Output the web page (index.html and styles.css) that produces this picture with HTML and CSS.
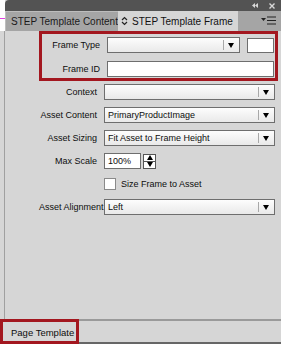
FILE: index.html
```html
<!DOCTYPE html>
<html>
<head>
<meta charset="utf-8">
<link rel="stylesheet" href="styles.css">
</head>
<body>
<div class="app">
  <div class="top">
    <div class="gutter">
      <div class="gutter-white"><div class="magenta"></div></div>
      <div class="gutter-gray"></div>
    </div>
    <div class="panel">
      <div class="titlebar">
        <svg class="ico-collapse" width="6" height="5" viewBox="0 0 6 5"><path d="M3 0 L0 2.5 L3 5 Z M6 0 L3 2.5 L6 5 Z" fill="#d8d8d8"/></svg>
        <svg class="ico-close" width="6" height="6" viewBox="0 0 6 6"><path d="M0.5 0.5 L5.5 5.5 M5.5 0.5 L0.5 5.5" stroke="#d8d8d8" stroke-width="1.4"/></svg>
      </div>
      <div class="tabs">
        <div class="tab tab-inactive"><span class="tab-text">STEP Template Content</span></div>
        <div class="tab tab-active">
          <svg class="ico-updown" width="7" height="10" viewBox="0 0 7 10"><path d="M1 4 L3.5 1.5 L6 4 M1 6 L3.5 8.5 L6 6" stroke="#222" stroke-width="1.2" fill="none"/></svg>
          <span class="tab-text">STEP Template Frame</span>
        </div>
        <div class="tab-rest">
          <svg class="ico-menu" width="15" height="9" viewBox="0 0 15 9"><path d="M0 2 L5 2 L2.5 5 Z" fill="#222"/><path d="M6 1 H15 M6 4.5 H15 M6 8 H15" stroke="#222" stroke-width="1.2"/></svg>
        </div>
      </div>
      <div class="body">
        <div class="highlight">
          <div class="hl-row">
            <label class="lbl lbl-in">Frame Type</label>
            <div class="select select-short"><span class="sel-text"></span><span class="sep"></span><span class="arrow"></span></div>
            <div class="box-small"></div>
          </div>
          <div class="hl-row">
            <label class="lbl lbl-in">Frame ID</label>
            <div class="input input-wide"></div>
          </div>
        </div>
        <div class="form">
          <label class="lbl">Context</label>
          <div class="select"><span class="sel-text"></span><span class="sep"></span><span class="arrow"></span></div>

          <label class="lbl">Asset Content</label>
          <div class="select"><span class="sel-text">PrimaryProductImage</span><span class="sep"></span><span class="arrow"></span></div>

          <label class="lbl">Asset Sizing</label>
          <div class="select"><span class="sel-text">Fit Asset to Frame Height</span><span class="sep"></span><span class="arrow"></span></div>

          <label class="lbl">Max Scale</label>
          <div class="scale">
            <div class="input input-scale"><span class="sel-text">100%</span></div>
            <div class="spinner"><div class="spin-up"><span class="arrow-up"></span></div><div class="spin-down"><span class="arrow"></span></div></div>
          </div>

          <span class="lbl"></span>
          <div class="check-row"><span class="checkbox"></span><span class="check-text">Size Frame to Asset</span></div>

          <label class="lbl">Asset Alignment</label>
          <div class="select"><span class="sel-text">Left</span><span class="sep"></span><span class="arrow"></span></div>
        </div>
      </div>
    </div>
  </div>
  <div class="footer">
    <div class="footer-tab">Page Template</div>
  </div>
</div>
</body>
</html>
```

FILE: styles.css
```css
* { box-sizing: border-box; }
html, body { margin: 0; padding: 0; }
body {
  width: 281px;
  height: 344px;
  overflow: hidden;
  background: #fff;
  font-family: "Liberation Sans", Arial, sans-serif;
  font-size: 9px;
  color: #0d0d0d;
}
.app {
  display: flex;
  flex-direction: column;
  height: 344px;
}
.top {
  display: flex;
  flex: 1;
  min-height: 0;
}
.gutter {
  width: 7px;
  display: flex;
  flex-direction: column;
}
.gutter-white {
  height: 31px;
  background: #fff;
  padding-top: 18px;
}
.magenta {
  height: 1px;
  background: #e040e0;
}
.gutter-gray {
  flex: 1;
  background: #d6d6d6;
  border-right: 1px solid #a0a0a0;
}
.panel {
  flex: 1;
  display: flex;
  flex-direction: column;
  background: #d6d6d6;
}
.titlebar {
  height: 11px;
  background: #535353;
  border-top-left-radius: 4px;
  display: flex;
  align-items: center;
  justify-content: flex-end;
  padding-right: 6px;
  gap: 11px;
}
.tabs {
  height: 20px;
  display: flex;
  background: #a5a5a5;
  border-bottom: 1px solid #a5a5a5;
}
.tab {
  display: flex;
  align-items: center;
  height: 20px;
  font-size: 10px;
  white-space: nowrap;
  overflow: hidden;
}
.tab-inactive {
  width: 113px;
  padding-left: 5px;
  background: #a5a5a5;
  border-top: 1px solid #bdbdbd;
  border-left: 1px solid #bdbdbd;
  color: #1a1a1a;
}
.tab-active {
  width: 120px;
  padding-left: 3px;
  gap: 4px;
  background: #d6d6d6;
  color: #111;
}
.tab-rest {
  flex: 1;
  display: flex;
  align-items: center;
  justify-content: flex-end;
  padding-right: 5px;
}
.body {
  flex: 1;
  padding: 0 3px 0 34px;
}
.highlight {
  border: 3px solid #a3171f;
  padding: 3px 1px 1px 3px;
  display: flex;
  flex-direction: column;
  gap: 8px;
}
.hl-row {
  display: flex;
  align-items: center;
  gap: 7px;
}
.lbl {
  text-align: right;
  white-space: nowrap;
  align-self: center;
}
.lbl-in {
  width: 55px;
}
.select {
  height: 16px;
  border: 1px solid #6e6e6e;
  background: linear-gradient(#fdfdfd, #e9e9e9);
  display: flex;
  align-items: center;
  padding-left: 3px;
  padding-right: 5px;
}
.select-short {
  width: 133px;
}
.sel-text {
  flex: 1;
  white-space: nowrap;
  overflow: hidden;
}
.sep {
  width: 1px;
  height: 10px;
  background: #a8a8a8;
  margin-right: 4px;
}
.arrow {
  width: 0;
  height: 0;
  border-left: 3.5px solid transparent;
  border-right: 3.5px solid transparent;
  border-top: 5px solid #000;
}
.arrow-up {
  width: 0;
  height: 0;
  border-left: 3.5px solid transparent;
  border-right: 3.5px solid transparent;
  border-bottom: 5px solid #000;
}
.box-small {
  width: 27px;
  height: 15px;
  background: #fff;
  border: 1px solid #6e6e6e;
}
.input {
  height: 16px;
  background: #fff;
  border: 1px solid #6e6e6e;
  display: flex;
  align-items: center;
  padding-left: 3px;
}
.input-wide {
  flex: 1;
}
.form {
  margin-top: 3px;
  display: grid;
  grid-template-columns: 58px 1fr;
  grid-auto-rows: 16px;
  column-gap: 7px;
  row-gap: 7px;
  padding-right: 3px;
}
.scale {
  display: flex;
  align-items: center;
  gap: 2px;
}
.input-scale {
  width: 37px;
}
.spinner {
  width: 13px;
  height: 15px;
  border: 1px solid #555;
  background: #fff;
  display: flex;
  flex-direction: column;
}
.spin-up, .spin-down {
  flex: 1;
  display: flex;
  align-items: center;
  justify-content: center;
}
.spin-up {
  border-bottom: 1px solid #555;
}
.check-row {
  display: flex;
  align-items: center;
  gap: 5px;
}
.checkbox {
  width: 12px;
  height: 12px;
  background: #fff;
  border: 1px solid #8a8a8a;
}
.footer {
  height: 25px;
  background: #d6d6d6;
  border-top: 2px solid #9a9a9a;
  border-bottom: 2px solid #666;
  display: flex;
  margin-top: -1px;
}
.footer-tab {
  width: 79px;
  margin-top: -2px;
  margin-bottom: -2px;
  border: 3px solid #a3171f;
  display: flex;
  align-items: center;
  padding-left: 8px;
  padding-top: 2px;
  font-size: 9.5px;
}
```
